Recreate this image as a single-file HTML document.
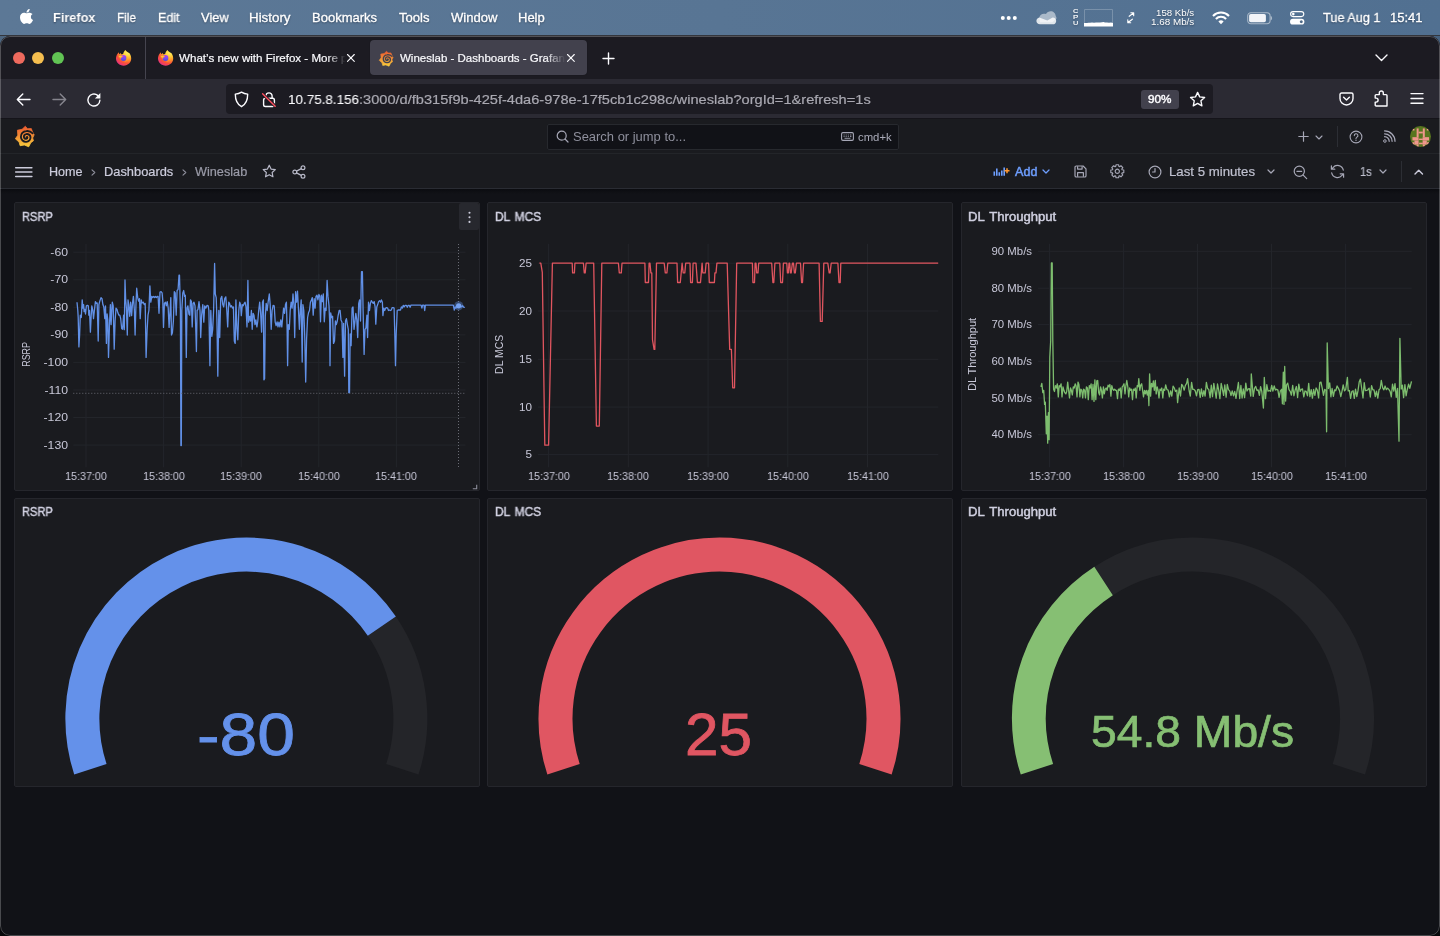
<!DOCTYPE html>
<html lang="en"><head><meta charset="utf-8"><title>Wineslab - Dashboards - Grafana</title>
<style>

html,body{margin:0;padding:0}
body{width:1440px;height:936px;overflow:hidden;position:relative;background:#07080a;font-family:"Liberation Sans",sans-serif;}
.t{position:absolute;white-space:nowrap;line-height:1;display:block;will-change:transform}
.abs{position:absolute}
svg{position:absolute;overflow:visible}
#desk{position:absolute;left:0;top:0;width:1440px;height:60px;background:linear-gradient(90deg,#4d657f,#45607e)}
#menubar{position:absolute;left:0;top:0;width:1440px;height:35px;background:linear-gradient(90deg,#5c7896 0%,#587594 50%,#517091 100%)}
#menubar .t{text-shadow:0 1px 2px rgba(0,0,20,.45)}
#menubar .m{-webkit-text-stroke:.3px #fff}
#mbline{position:absolute;left:0;top:35px;width:1440px;height:1px;background:#33363d}
#win{position:absolute;left:0;top:0;width:1440px;height:936px;clip-path:inset(36px 0 0 0 round 10px);background:#111217}
#winborder{position:absolute;left:0;top:36px;width:1438px;height:898px;border:1px solid rgba(255,255,255,.24);border-radius:10px;pointer-events:none}
#tabbar{position:absolute;left:0;top:36px;width:1440px;height:43px;background:#1c1b22}
#navbar{position:absolute;left:0;top:79px;width:1440px;height:39px;background:#2b2a33}
#navsep{position:absolute;left:0;top:118px;width:1440px;height:1px;background:#15141a}
#gtop{position:absolute;left:0;top:119px;width:1440px;height:35px;background:#1a1b1f;border-bottom:1px solid #232529;box-sizing:border-box}
#gbar{position:absolute;left:0;top:154px;width:1440px;height:34px;background:#1a1b1f}
#gbarline{position:absolute;left:0;top:188px;width:1440px;height:1px;background:#2a2c33}
#gshadow{position:absolute;left:0;top:189px;width:1440px;height:5px;background:linear-gradient(#0b0c10,#111217)}
.panel{position:absolute;background:#1a1b1f;border:1px solid #25262c;border-radius:2px;box-sizing:border-box}

</style></head>
<body>
<div id="desk"></div><div id="menubar"><svg style="left:19.700px;top:9.400px" width="13" height="15" viewBox="0 0 814 1000" preserveAspectRatio="none"><path fill="#fff" d="M788 340c-6 4-108 62-108 190 0 148 130 200 134 202-1 3-21 72-69 142-43 62-88 124-156 124s-86-40-165-40c-77 0-104 41-167 41s-106-57-156-127C43 790 0 663 0 542c0-194 126-297 250-297 66 0 121 43 162 43 39 0 101-46 176-46 28 0 130 3 197 98zM554 159c31-37 53-88 53-139 0-7-1-14-2-20-50 2-110 34-146 76-28 32-55 83-55 135 0 8 1 16 2 18 3 1 8 2 13 2 45 0 102-30 135-72z"/></svg>
<span class="t" style="left:52.60px;top:10.60px;font-size:13px;color:#fff;font-weight:700;transform:scaleX(0.9805);transform-origin:0 0;">Firefox</span>
<span class="t m" style="left:116.70px;top:10.60px;font-size:13px;color:#fff;transform:scaleX(0.9068);transform-origin:0 0;">File</span>
<span class="t m" style="left:157.70px;top:10.60px;font-size:13px;color:#fff;transform:scaleX(0.9640);transform-origin:0 0;">Edit</span>
<span class="t m" style="left:200.60px;top:10.60px;font-size:13px;color:#fff;transform:scaleX(0.9909);transform-origin:0 0;">View</span>
<span class="t m" style="left:249.40px;top:10.60px;font-size:13px;color:#fff;transform:scaleX(1.0259);transform-origin:0 0;">History</span>
<span class="t m" style="left:312.00px;top:10.60px;font-size:13px;color:#fff;transform:scaleX(0.9995);transform-origin:0 0;">Bookmarks</span>
<span class="t m" style="left:398.70px;top:10.60px;font-size:13px;color:#fff;transform:scaleX(1.0046);transform-origin:0 0;">Tools</span>
<span class="t m" style="left:450.50px;top:10.60px;font-size:13px;color:#fff;transform:scaleX(1.0054);transform-origin:0 0;">Window</span>
<span class="t m" style="left:517.50px;top:10.60px;font-size:13px;color:#fff;transform:scaleX(0.9981);transform-origin:0 0;">Help</span>
<svg style="left:1000px;top:14.900px" width="18" height="6" viewBox="0 0 18 6"><circle cx="2.800" cy="3" r="2" fill="#fff"/><circle cx="8.700" cy="3" r="2" fill="#fff"/><circle cx="14.800" cy="3" r="2" fill="#fff"/></svg>
<svg style="left:1035.800px;top:10.600px" width="20.500" height="13.500" viewBox="0 0 20.500 13.500"><path fill="#fff" fill-opacity=".5" d="M3.300 6.600C3.800 4.300 5.700 2.700 8 2.700c.7 0 1.400.2 2 .4C11 1.300 12.800.300 14.700.300c2.700 0 4.900 2.100 5 4.800.5.600.8 1.400.8 2.300l-4 3.900H4z"/><path fill="#fff" fill-opacity=".82" d="M4 13.300C1.900 13.300.4 11.800.4 10c0-1.700 1.200-3.100 2.900-3.400l8 3 5.400-3.100c2 .1 3.500 1.600 3.500 3.400 0 1.900-1.500 3.400-3.400 3.400z"/></svg>
<span class="t" style="left:1073.30px;top:8.42px;font-size:6px;color:#fff;transform:scaleX(1.2201);transform-origin:0 0;-webkit-text-stroke:.15px #fff;">C</span>
<span class="t" style="left:1073.30px;top:14.32px;font-size:6px;color:#fff;transform:scaleX(1.3198);transform-origin:0 0;-webkit-text-stroke:.15px #fff;">P</span>
<span class="t" style="left:1073.30px;top:20.22px;font-size:6px;color:#fff;transform:scaleX(1.2201);transform-origin:0 0;-webkit-text-stroke:.15px #fff;">U</span>
<div class="abs" style="left:1083.500px;top:9.200px;width:29px;height:16.800px;box-sizing:border-box;border:1px solid rgba(255,255,255,.22);border-bottom:none;border-radius:1px"></div>
<svg style="left:1083.5px;top:9.5px" width="29" height="16.5" viewBox="0 0 29 16.5"><path fill="#fff" d="M0 16.500V13.100L1.500 12.900 3 13 4.500 12.700 6 12.800 8 12.600 10 12.700 12 12.500 14 12.600 16 12.400 18 12.300 19.500 12 21 12.400 23 12.500 25 12.700 27 12.600 29 12.900V16.500z"/></svg>
<svg style="left:1127.300px;top:12px" width="7.500" height="11.500" viewBox="0 0 7.500 11.500" fill="none" stroke="#fff" stroke-width="1.100" stroke-linecap="round" stroke-linejoin="round"><path d="M2.200 4.300 6.500 1M3.800 .8h2.900v2.900M5.400 7.200 1 10.500M3.700 10.700H.8V7.800"/></svg>
<span class="t" style="left:1155.80px;top:8.95px;font-size:8.8px;color:#fff;transform:scaleX(1.0998);transform-origin:0 0;">158 Kb/s</span>
<span class="t" style="left:1150.70px;top:17.85px;font-size:8.8px;color:#fff;transform:scaleX(1.1206);transform-origin:0 0;">1.68 Mb/s</span>
<svg style="left:1211.5px;top:10.5px" width="18" height="13.500" viewBox="0 0 18 13.5"><g fill="none" stroke="#fff" stroke-width="2.100" stroke-linecap="butt"><path d="M1 4.900a11.200 11.200 0 0 1 16 0"/><path d="M3.900 7.900a7.100 7.100 0 0 1 10.200 0"/></g><path fill="#fff" d="M9 13.200 6.400 10.500a3.600 3.600 0 0 1 5.200 0z"/></svg>
<svg style="left:1247px;top:11.800px" width="25.500" height="12.400" viewBox="0 0 25.500 12.400"><rect x=".7" y=".7" width="22.400" height="11" rx="3.200" fill="none" stroke="#fff" stroke-opacity=".5" stroke-width="1.100"/><rect x="2.100" y="2.100" width="16.800" height="8.200" rx="1.700" fill="#f2f4f8"/><path d="M23.800 4.100v4.200c.8-.3 1.300-1.100 1.300-2.100s-.5-1.800-1.300-2.100z" fill="#fff" fill-opacity=".5"/></svg>
<svg style="left:1290px;top:10.700px" width="14.500" height="13.600" viewBox="0 0 14.500 13.600"><rect x=".6" y=".6" width="13.200" height="5" rx="2.500" fill="none" stroke="#fff" stroke-width="1.100"/><circle cx="3.300" cy="3.100" r="1.300" fill="#fff"/><rect x="0" y="7.700" width="14.400" height="5.900" rx="2.950" fill="#fff"/><circle cx="11.300" cy="10.650" r="1.500" fill="#4f6a88"/></svg>
<span class="t m" style="left:1322.50px;top:10.60px;font-size:13px;color:#fff;transform:scaleX(0.9779);transform-origin:0 0;">Tue Aug 1</span>
<span class="t m" style="left:1390.00px;top:10.60px;font-size:13px;color:#fff;transform:scaleX(0.9986);transform-origin:0 0;">15:41</span></div><div id="mbline"></div>
<div id="win">
<div id="tabbar"></div><div class="abs" style="left:12.8px;top:51.8px;width:12px;height:12px;border-radius:50%;background:#ee6a5e"></div>
<div class="abs" style="left:32.3px;top:51.8px;width:12px;height:12px;border-radius:50%;background:#f5be4f"></div>
<div class="abs" style="left:51.8px;top:51.8px;width:12px;height:12px;border-radius:50%;background:#61c454"></div>
<svg style="left:115.89px;top:49.75px" width="15.22" height="15.70" viewBox="120 116 316 326">
<defs><radialGradient id="fxoa" gradientUnits="userSpaceOnUse" cx="372" cy="150" r="330"><stop offset="0" stop-color="#fff56a"/><stop offset=".28" stop-color="#ffd43e"/><stop offset=".5" stop-color="#ff9a2a"/><stop offset=".74" stop-color="#fa5038"/><stop offset="1" stop-color="#e62e86"/></radialGradient>
<linearGradient id="fxia" x1="0" y1="0" x2="0" y2="1"><stop offset="0" stop-color="#b63ee6"/><stop offset=".55" stop-color="#7a4cf0"/><stop offset="1" stop-color="#4a50d8"/></linearGradient></defs>
<path fill="url(#fxoa)" d="M318 116 C335 145 352 158 372 168 C390 176 402 184 408 194 C422 215 434 250 436 295 C436 375 372 442 280 442 C190 442 120 378 120 295 C120 255 134 220 150 200 C156 190 164 176 172 163 C178 182 186 194 196 202 C202 192 208 184 216 176 C222 192 230 202 242 208 C252 200 262 196 270 192 C276 165 292 135 318 116Z"/>
<circle cx="276" cy="282" r="60" fill="url(#fxia)"/>
<path fill="#ff9a2a" d="M168 236 C200 232 240 240 272 258 C250 262 232 274 222 296 C200 290 178 270 168 236Z"/>
<path fill="#ffcf3e" fill-opacity=".9" d="M180 244 C205 240 240 246 268 258 C248 258 230 262 214 270 C200 264 188 256 180 244Z"/>
<path fill="none" stroke="#ffb52e" stroke-opacity=".55" stroke-width="14" d="M346 232 C372 290 350 350 296 362"/>
</svg>
<div class="abs" style="left:144.800px;top:37px;width:1.400px;height:42px;background:#45444f"></div>
<svg style="left:157.89px;top:49.95px" width="15.22" height="15.70" viewBox="120 116 316 326">
<defs><radialGradient id="fxob" gradientUnits="userSpaceOnUse" cx="372" cy="150" r="330"><stop offset="0" stop-color="#fff56a"/><stop offset=".28" stop-color="#ffd43e"/><stop offset=".5" stop-color="#ff9a2a"/><stop offset=".74" stop-color="#fa5038"/><stop offset="1" stop-color="#e62e86"/></radialGradient>
<linearGradient id="fxib" x1="0" y1="0" x2="0" y2="1"><stop offset="0" stop-color="#b63ee6"/><stop offset=".55" stop-color="#7a4cf0"/><stop offset="1" stop-color="#4a50d8"/></linearGradient></defs>
<path fill="url(#fxob)" d="M318 116 C335 145 352 158 372 168 C390 176 402 184 408 194 C422 215 434 250 436 295 C436 375 372 442 280 442 C190 442 120 378 120 295 C120 255 134 220 150 200 C156 190 164 176 172 163 C178 182 186 194 196 202 C202 192 208 184 216 176 C222 192 230 202 242 208 C252 200 262 196 270 192 C276 165 292 135 318 116Z"/>
<circle cx="276" cy="282" r="60" fill="url(#fxib)"/>
<path fill="#ff9a2a" d="M168 236 C200 232 240 240 272 258 C250 262 232 274 222 296 C200 290 178 270 168 236Z"/>
<path fill="#ffcf3e" fill-opacity=".9" d="M180 244 C205 240 240 246 268 258 C248 258 230 262 214 270 C200 264 188 256 180 244Z"/>
<path fill="none" stroke="#ffb52e" stroke-opacity=".55" stroke-width="14" d="M346 232 C372 290 350 350 296 362"/>
</svg>
<span class="t" style="left:179.00px;top:53.17px;font-size:11.5px;color:#fbfbfe;transform:scaleX(1.0076);transform-origin:0 0;-webkit-text-stroke:.2px #fbfbfe;-webkit-mask-image:linear-gradient(90deg,#000 88%,transparent 99%);mask-image:linear-gradient(90deg,#000 88%,transparent 99%);">What&#8217;s new with Firefox - More p</span>
<svg style="left:346.8px;top:54.3px" width="7.8" height="7.8" viewBox="-3.9 -3.9 7.8 7.8"><path d="M-3.4 -3.4L3.4 3.4M3.4 -3.4L-3.4 3.4" stroke="#fbfbfe" stroke-width="1.1" stroke-linecap="round"/></svg>
<div class="abs" style="left:370px;top:40px;width:217px;height:35px;border-radius:4px;background:#42414d;box-shadow:0 0 1px rgba(0,0,0,.5)"></div>
<svg style="left:379.08px;top:50.70px" width="14.24" height="15.40" viewBox="205 120 615 665">
<defs><linearGradient id="glt" x1="0" y1="0" x2="0" y2="1"><stop offset="0" stop-color="#ec5a30"/><stop offset=".45" stop-color="#f08a35"/><stop offset="1" stop-color="#f8cd3c"/></linearGradient></defs>
<path d="M532 128 L600 205 L722 202 L755 295 L812 400 L765 500 L790 588 L705 650 L640 778 L500 722 L367 745 L335 630 L216 525 L295 410 L282 252 L430 225 Z" fill="url(#glt)" stroke="url(#glt)" stroke-width="26" stroke-linejoin="round"/>
<path d="M764 352 A235 235 0 0 0 560 282 A178 178 0 0 0 392 470 A158 158 0 0 0 560 622 A145 145 0 0 0 697 470 A112 112 0 0 0 560 376 A82 82 0 0 0 488 470 A62 62 0 0 0 560 528 A45 45 0 0 0 596 478" fill="none" stroke="#42414d" stroke-width="60" stroke-linecap="round"/>
<circle cx="578" cy="482" r="40" fill="#42414d"/>
</svg>
<span class="t" style="left:399.50px;top:53.17px;font-size:11.5px;color:#fbfbfe;transform:scaleX(1.0006);transform-origin:0 0;-webkit-text-stroke:.2px #fbfbfe;-webkit-mask-image:linear-gradient(90deg,#000 88%,transparent 100%);mask-image:linear-gradient(90deg,#000 88%,transparent 100%);">Wineslab - Dashboards - Grafan</span>
<svg style="left:567.3px;top:54.3px" width="7.8" height="7.8" viewBox="-3.9 -3.9 7.8 7.8"><path d="M-3.4 -3.4L3.4 3.4M3.4 -3.4L-3.4 3.4" stroke="#fbfbfe" stroke-width="1.1" stroke-linecap="round"/></svg>
<svg style="left:601.5px;top:52px" width="13" height="13" viewBox="0 0 13 13"><path d="M6.500 1v11M1 6.500h11" stroke="#fbfbfe" stroke-width="1.400" stroke-linecap="round"/></svg>
<svg style="left:1375px;top:53.500px" width="13" height="8" viewBox="0 0 13 8"><path d="M1 1l5.500 5.500L12 1" fill="none" stroke="#fbfbfe" stroke-width="1.400" stroke-linecap="round" stroke-linejoin="round"/></svg>
<div id="navbar"></div><div id="navsep"></div><svg style="left:16px;top:92px" width="15" height="15" viewBox="0 0 15 15"><path d="M14 7.500H1.500M6.800 2l-5.500 5.500 5.500 5.500" fill="none" stroke="#fbfbfe" stroke-width="1.400" stroke-linecap="round" stroke-linejoin="round"/></svg>
<svg style="left:51.500px;top:92px" width="15" height="15" viewBox="0 0 15 15"><path d="M1 7.500h12.500M8.200 2l5.500 5.500-5.500 5.500" fill="none" stroke="#85848d" stroke-width="1.400" stroke-linecap="round" stroke-linejoin="round"/></svg>
<svg style="left:85.900px;top:91.600px" width="16" height="16" viewBox="0 0 16 16"><path d="M13.900 8.300a6 6 0 1 1-2.200-4.900" fill="none" stroke="#fbfbfe" stroke-width="1.400" stroke-linecap="round"/><path d="M14.400 .9v5.500H8.900z" fill="#fbfbfe"/></svg>
<div class="abs" style="left:226.200px;top:83.700px;width:987.200px;height:30.600px;border-radius:4px;background:#1c1b22"></div>
<svg style="left:234px;top:90.700px" width="15" height="17" viewBox="0 0 15 17"><path d="M7.500 1.200c2 1.300 4 1.800 6.200 1.900 0 5.600-1.500 10.200-6.200 12.600C2.800 13.300 1.300 8.700 1.300 3.100c2.200-.1 4.200-.6 6.200-1.900z" fill="none" stroke="#fbfbfe" stroke-width="1.400" stroke-linejoin="round"/></svg>
<svg style="left:261.300px;top:90.500px" width="16" height="17" viewBox="0 0 16 17"><rect x="2.600" y="7.300" width="10.800" height="8.200" rx="1.800" fill="none" stroke="#fbfbfe" stroke-width="1.400"/><path d="M4.900 7.200V5a3.100 3.100 0 0 1 6.200 0v2.200" fill="none" stroke="#fbfbfe" stroke-width="1.400"/><path d="M1.600 2.800 14.200 15.200" stroke="#1c1b22" stroke-width="3.200"/><path d="M1.600 2.800 14.200 15.200" stroke="#ff4f5e" stroke-width="1.400" stroke-linecap="round"/></svg>
<span class="t" style="left:287.50px;top:93.09px;font-size:13.6px;color:#fbfbfe;transform:scaleX(0.9887);transform-origin:0 0;-webkit-text-stroke:.08px #fbfbfe;">10.75.8.156</span>
<span class="t" style="left:358.80px;top:93.09px;font-size:13.6px;color:#a9a8b1;transform:scaleX(1.0747);transform-origin:0 0;-webkit-text-stroke:.2px #a9a8b1;">:3000/d/fb315f9b-425f-4da6-978e-17f5cb1c298c/wineslab?orgId=1&amp;refresh=1s</span>
<div class="abs" style="left:1141px;top:90px;width:37.500px;height:18.500px;border-radius:3px;background:#42414d"></div>
<span class="t" style="left:1147.80px;top:93.99px;font-size:11px;color:#fbfbfe;transform:scaleX(1.0621);transform-origin:0 0;-webkit-text-stroke:.45px #fbfbfe;">90%</span>
<svg style="left:1189.300px;top:90.700px" width="17.200" height="16.800" viewBox="0 0 16 16"><path d="M8 1.300l2 4.300 4.700.6-3.500 3.200.9 4.700L8 11.800l-4.100 2.300.9-4.700L1.300 6.200 6 5.600z" fill="none" stroke="#fbfbfe" stroke-width="1.300" stroke-linejoin="round"/></svg>
<svg style="left:1338.500px;top:92px" width="15" height="14" viewBox="0 0 15 14"><path d="M2.600 1h9.800c.9 0 1.600.7 1.600 1.600v3.900a6.500 6.500 0 0 1-13 0V2.600C1 1.700 1.700 1 2.600 1z" fill="none" stroke="#fbfbfe" stroke-width="1.400"/><path d="M4.600 5.300 7.500 8.100l2.900-2.800" fill="none" stroke="#fbfbfe" stroke-width="1.400" stroke-linecap="round" stroke-linejoin="round"/></svg>
<svg style="left:1374.300px;top:90.200px" width="14.500" height="17" viewBox="0 0 14.500 17"><path d="M5.300 4.600V3a2 2 0 0 1 4 0v1.600h2.700c.6 0 1 .4 1 1V16H2.200c-.6 0-1-.4-1-1v-2.900h.9a2 2 0 0 0 0-4h-.9V5.600c0-.6.400-1 1-1z" fill="none" stroke="#fbfbfe" stroke-width="1.400" stroke-linejoin="round"/></svg>
<svg style="left:1409.700px;top:92.100px" width="14" height="12" viewBox="0 0 14 12"><path d="M1 1.600h12M1 6.500h12M1 11.300h12" stroke="#fbfbfe" stroke-width="1.400" stroke-linecap="round"/></svg>
<div id="gtop"></div><svg style="left:14.74px;top:126.00px" width="19.42" height="21.00" viewBox="205 120 615 665">
<defs><linearGradient id="glm" x1="0" y1="0" x2="0" y2="1"><stop offset="0" stop-color="#ec5a30"/><stop offset=".45" stop-color="#f08a35"/><stop offset="1" stop-color="#f8cd3c"/></linearGradient></defs>
<path d="M532 128 L600 205 L722 202 L755 295 L812 400 L765 500 L790 588 L705 650 L640 778 L500 722 L367 745 L335 630 L216 525 L295 410 L282 252 L430 225 Z" fill="url(#glm)" stroke="url(#glm)" stroke-width="26" stroke-linejoin="round"/>
<path d="M764 352 A235 235 0 0 0 560 282 A178 178 0 0 0 392 470 A158 158 0 0 0 560 622 A145 145 0 0 0 697 470 A112 112 0 0 0 560 376 A82 82 0 0 0 488 470 A62 62 0 0 0 560 528 A45 45 0 0 0 596 478" fill="none" stroke="#1a1b1f" stroke-width="60" stroke-linecap="round"/>
<circle cx="578" cy="482" r="40" fill="#1a1b1f"/>
</svg>
<div class="abs" style="left:547px;top:124px;width:352px;height:26px;box-sizing:border-box;border:1px solid #27292e;border-radius:2px;background:#111217"></div>
<svg style="left:555.500px;top:130px" width="13" height="13" viewBox="0 0 13 13"><circle cx="5.700" cy="5.700" r="4.500" fill="none" stroke="#a6a7b6" stroke-width="1.200"/><path d="M9 9l3 3" stroke="#a6a7b6" stroke-width="1.200" stroke-linecap="round"/></svg>
<span class="t" style="left:572.80px;top:131.00px;font-size:12.4px;color:#8e8f9c;transform:scaleX(1.0451);transform-origin:0 0;">Search or jump to...</span>
<svg style="left:841px;top:132px" width="13" height="9" viewBox="0 0 13 9"><rect x=".6" y=".6" width="11.800" height="7.800" rx="1.300" fill="none" stroke="#a6a7b6" stroke-width="1.100"/><path d="M2.600 3h1M4.700 3h1M6.800 3h1M9 3h1.400M2.600 4.600h1M4.700 4.600h1M6.800 4.600h1M9 4.600h1.400M3.500 6.300h6" stroke="#a6a7b6" stroke-width=".9"/></svg>
<span class="t" style="left:858.00px;top:131.79px;font-size:11px;color:#a9aab8;transform:scaleX(1.0300);transform-origin:0 0;">cmd+k</span>
<svg style="left:1297.500px;top:131px" width="11" height="11" viewBox="0 0 11 11"><path d="M5.500 .8v9.400M.8 5.500h9.400" stroke="#a6a7b6" stroke-width="1.200" stroke-linecap="round"/></svg>
<svg style="left:1314.500px;top:134.500px" width="8" height="5" viewBox="0 0 8 5"><path d="M1 1l3 3 3-3" fill="none" stroke="#a6a7b6" stroke-width="1.100" stroke-linecap="round" stroke-linejoin="round"/></svg>
<div class="abs" style="left:1336.500px;top:126px;width:1px;height:21px;background:#2c2e34"></div>
<svg style="left:1348.500px;top:130px" width="14" height="14" viewBox="0 0 14 14"><circle cx="7" cy="7" r="5.900" fill="none" stroke="#a6a7b6" stroke-width="1.100"/><path d="M5.300 5.600a1.800 1.800 0 1 1 2.700 1.500c-.6.400-1 .7-1 1.400" fill="none" stroke="#a6a7b6" stroke-width="1.100" stroke-linecap="round"/><circle cx="7" cy="10.200" r=".7" fill="#a6a7b6"/></svg>
<svg style="left:1383px;top:130px" width="13" height="13" viewBox="0 0 13 13"><circle cx="1.900" cy="11" r="1.300" fill="none" stroke="#a6a7b6" stroke-width="1"/><path d="M1.600 6.700a4.600 4.600 0 0 1 4.600 4.600M1.600 3.800a7.500 7.500 0 0 1 7.500 7.500M1.600 .9A10.400 10.400 0 0 1 12 11.300" fill="none" stroke="#a6a7b6" stroke-width="1.250" stroke-linecap="round"/></svg>
<svg style="left:1409.800px;top:125.900px" width="21" height="21" viewBox="1168 53 190 190"><defs><clipPath id="avc"><circle cx="1263" cy="148" r="95"/></clipPath></defs><g clip-path="url(#avc)"><rect x="1168" y="53" width="190" height="190" fill="#58751f"/><rect x="1228" y="75" width="18" height="78" fill="#f0968c"/><rect x="1284" y="75" width="18" height="78" fill="#f0968c"/><rect x="1246" y="104" width="38" height="16" fill="#f0968c"/><rect x="1192" y="80" width="16" height="14" fill="#f0968c"/><rect x="1320" y="80" width="16" height="14" fill="#f0968c"/><rect x="1190" y="154" width="56" height="30" fill="#f0968c"/><rect x="1282" y="154" width="58" height="30" fill="#f0968c"/><rect x="1208" y="184" width="38" height="38" fill="#f0968c"/><rect x="1282" y="184" width="38" height="38" fill="#f0968c"/><rect x="1190" y="200" width="18" height="22" fill="#f0968c"/><rect x="1322" y="200" width="18" height="22" fill="#f0968c"/><rect x="1250" y="167" width="34" height="13" fill="#f0968c"/><rect x="1250" y="204" width="34" height="14" fill="#f0968c"/><rect x="1228" y="222" width="18" height="22" fill="#f0968c"/><rect x="1284" y="222" width="18" height="22" fill="#f0968c"/></g></svg>
<div id="gbar"></div><div id="gbarline"></div><div id="gshadow"></div><svg style="left:15.300px;top:165.500px" width="17.600" height="12" viewBox="0 0 17.600 12"><path d="M.7 1.700h16.200M.7 6h16.200M.7 10.400h16.200" stroke="#ccccdc" stroke-width="1.500" stroke-linecap="round"/></svg>
<span class="t" style="left:48.70px;top:165.83px;font-size:12.6px;color:#ccccdc;transform:scaleX(0.9913);transform-origin:0 0;-webkit-text-stroke:.2px #ccccdc;">Home</span>
<svg style="left:91px;top:168.500px" width="5" height="7" viewBox="0 0 5 7"><path d="M1 .8 3.800 3.500 1 6.200" fill="none" stroke="#8e8f9c" stroke-width="1.100" stroke-linecap="round" stroke-linejoin="round"/></svg>
<span class="t" style="left:103.70px;top:165.83px;font-size:12.6px;color:#ccccdc;transform:scaleX(1.0203);transform-origin:0 0;-webkit-text-stroke:.2px #ccccdc;">Dashboards</span>
<svg style="left:181.500px;top:168.500px" width="5" height="7" viewBox="0 0 5 7"><path d="M1 .8 3.800 3.500 1 6.200" fill="none" stroke="#8e8f9c" stroke-width="1.100" stroke-linecap="round" stroke-linejoin="round"/></svg>
<span class="t" style="left:194.50px;top:165.83px;font-size:12.6px;color:#9a9ba8;transform:scaleX(1.0078);transform-origin:0 0;-webkit-text-stroke:.2px #9a9ba8;">Wineslab</span>
<svg style="left:261.500px;top:164px" width="14.500" height="14.500" viewBox="0 0 16 16"><path d="M8 1.300l2 4.300 4.700.6-3.500 3.200.9 4.700L8 11.800l-4.100 2.300.9-4.700L1.300 6.200 6 5.600z" fill="none" stroke="#b8b9c8" stroke-width="1.300" stroke-linejoin="round"/></svg>
<svg style="left:291.500px;top:164.500px" width="14" height="14" viewBox="0 0 14 14"><g fill="none" stroke="#b8b9c8" stroke-width="1.200"><circle cx="2.800" cy="7" r="1.900"/><circle cx="11" cy="2.700" r="1.900"/><circle cx="11" cy="11.300" r="1.900"/><path d="M4.500 6.100 9.300 3.600M4.500 7.900l4.800 2.500"/></g></svg>
<svg style="left:993px;top:165.500px" width="17" height="11" viewBox="0 0 17 11"><path d="M1.300 9.800V5.600M3.800 9.800V2.400M6.300 9.800V6.300M8.800 9.800V4.400M11.200 9.800V1.400" stroke="#6e9fff" stroke-width="1.600"/><path d="M14 2.300v5M11.500 4.800h5" stroke="#ff9830" stroke-width="1.500"/></svg>
<span class="t" style="left:1015.00px;top:165.93px;font-size:12.6px;color:#6e9fff;transform:scaleX(0.9946);transform-origin:0 0;-webkit-text-stroke:.5px #6e9fff;">Add</span>
<svg style="left:1042px;top:169px" width="8" height="5" viewBox="0 0 8 5"><path d="M1 1l3 3 3-3" fill="none" stroke="#6e9fff" stroke-width="1.300" stroke-linecap="round" stroke-linejoin="round"/></svg>
<svg style="left:1073.500px;top:165px" width="13" height="13" viewBox="0 0 13 13"><path d="M2.300 1h6.800l2.900 2.900v6.800c0 .7-.6 1.300-1.300 1.300H2.300C1.600 12 1 11.400 1 10.700V2.300C1 1.600 1.600 1 2.300 1z" fill="none" stroke="#a6a7b6" stroke-width="1.200" stroke-linejoin="round"/><path d="M3.600 1.200v2.900h4.500V1.200M3.600 11.800V7.700h5.800v4.100" fill="none" stroke="#a6a7b6" stroke-width="1.200" stroke-linejoin="round"/></svg>
<svg style="left:1109.7px;top:164.2px" width="14.6" height="14.6" viewBox="-1.1 -1.1 2.2 2.2"><path d="M0.980 -0.199L0.980 0.199L0.721 0.239L0.679 0.341L0.833 0.553L0.553 0.833L0.341 0.679L0.239 0.721L0.199 0.980L-0.199 0.980L-0.239 0.721L-0.341 0.679L-0.553 0.833L-0.833 0.553L-0.679 0.341L-0.721 0.239L-0.980 0.199L-0.980 -0.199L-0.721 -0.239L-0.679 -0.341L-0.833 -0.553L-0.553 -0.833L-0.341 -0.679L-0.239 -0.721L-0.199 -0.980L0.199 -0.980L0.239 -0.721L0.341 -0.679L0.553 -0.833L0.833 -0.553L0.679 -0.341L0.721 -0.239z" fill="none" stroke="#a6a7b6" stroke-width=".17" stroke-linejoin="round"/><circle r=".32" fill="none" stroke="#a6a7b6" stroke-width=".17"/></svg>
<svg style="left:1147.500px;top:164.500px" width="14" height="14" viewBox="0 0 14 14"><circle cx="7" cy="7" r="5.900" fill="none" stroke="#a6a7b6" stroke-width="1.200"/><path d="M7 3.600V7H4.600" fill="none" stroke="#a6a7b6" stroke-width="1.200" stroke-linecap="round" stroke-linejoin="round"/></svg>
<span class="t" style="left:1169.30px;top:165.93px;font-size:12.6px;color:#bfc0cf;transform:scaleX(1.0500);transform-origin:0 0;-webkit-text-stroke:.2px #bfc0cf;">Last 5 minutes</span>
<svg style="left:1266.500px;top:169px" width="8" height="5" viewBox="0 0 8 5"><path d="M1 1l3 3 3-3" fill="none" stroke="#a6a7b6" stroke-width="1.200" stroke-linecap="round" stroke-linejoin="round"/></svg>
<svg style="left:1293px;top:164.500px" width="15" height="15" viewBox="0 0 15 15"><circle cx="6.300" cy="6.300" r="5.100" fill="none" stroke="#a6a7b6" stroke-width="1.200"/><path d="M10.200 10.200l3.500 3.500M3.900 6.300h4.800" stroke="#a6a7b6" stroke-width="1.200" stroke-linecap="round"/></svg>
<svg style="left:1330px;top:164px" width="15" height="15" viewBox="0 0 15 15"><g fill="none" stroke="#a6a7b6" stroke-width="1.200" stroke-linecap="round" stroke-linejoin="round"><path d="M13.300 6.200A5.900 5.900 0 0 0 3 3.600L1.400 5.200M1.400 1.800v3.400h3.400"/><path d="M1.700 8.800A5.900 5.900 0 0 0 12 11.400l1.600-1.600M13.600 13.200V9.800h-3.400"/></g></svg>
<span class="t" style="left:1360.00px;top:165.93px;font-size:12.6px;color:#bfc0cf;transform:scaleX(0.8789);transform-origin:0 0;-webkit-text-stroke:.2px #bfc0cf;">1s</span>
<svg style="left:1378.500px;top:169px" width="8" height="5" viewBox="0 0 8 5"><path d="M1 1l3 3 3-3" fill="none" stroke="#a6a7b6" stroke-width="1.200" stroke-linecap="round" stroke-linejoin="round"/></svg>
<div class="abs" style="left:1400.500px;top:161px;width:1px;height:21px;background:#2c2e34"></div>
<svg style="left:1414px;top:169px" width="9.500" height="6" viewBox="0 0 9.500 6"><path d="M1 5l3.750-3.800L8.500 5" fill="none" stroke="#ccccdc" stroke-width="1.400" stroke-linecap="round" stroke-linejoin="round"/></svg>
<div class="panel" style="left:13.5px;top:202.1px;width:466.1px;height:288.5px"></div>
<div class="panel" style="left:13.5px;top:498.2px;width:466.1px;height:288.5px"></div>
<div class="panel" style="left:487.1px;top:202.1px;width:466.1px;height:288.5px"></div>
<div class="panel" style="left:487.1px;top:498.2px;width:466.1px;height:288.5px"></div>
<div class="panel" style="left:960.7px;top:202.1px;width:466.1px;height:288.5px"></div>
<div class="panel" style="left:960.7px;top:498.2px;width:466.1px;height:288.5px"></div>
<span class="t" style="left:21.80px;top:210.67px;font-size:12.2px;color:#d0d0e0;transform:scaleX(0.9092);transform-origin:0 0;-webkit-text-stroke:.45px #d0d0e0;word-spacing:1.500px;">RSRP</span>
<span class="t" style="left:494.50px;top:210.67px;font-size:12.2px;color:#d0d0e0;transform:scaleX(0.9786);transform-origin:0 0;-webkit-text-stroke:.45px #d0d0e0;word-spacing:1.500px;">DL MCS</span>
<span class="t" style="left:967.60px;top:210.67px;font-size:12.2px;color:#d0d0e0;transform:scaleX(1.0738);transform-origin:0 0;-webkit-text-stroke:.45px #d0d0e0;word-spacing:1.500px;">DL Throughput</span>
<span class="t" style="left:21.80px;top:506.17px;font-size:12.2px;color:#d0d0e0;transform:scaleX(0.9092);transform-origin:0 0;-webkit-text-stroke:.45px #d0d0e0;word-spacing:1.500px;">RSRP</span>
<span class="t" style="left:494.50px;top:506.17px;font-size:12.2px;color:#d0d0e0;transform:scaleX(0.9786);transform-origin:0 0;-webkit-text-stroke:.45px #d0d0e0;word-spacing:1.500px;">DL MCS</span>
<span class="t" style="left:967.60px;top:506.17px;font-size:12.2px;color:#d0d0e0;transform:scaleX(1.0738);transform-origin:0 0;-webkit-text-stroke:.45px #d0d0e0;word-spacing:1.500px;">DL Throughput</span>
<div class="abs" style="left:458.700px;top:203.100px;width:20px;height:27px;border-radius:2px;background:#27282e"></div>
<svg style="left:467.500px;top:210.500px" width="3" height="13" viewBox="0 0 3 13"><circle cx="1.500" cy="1.700" r="1.050" fill="#ccccdc"/><circle cx="1.500" cy="6.300" r="1.050" fill="#ccccdc"/><circle cx="1.500" cy="10.900" r="1.050" fill="#ccccdc"/></svg>
<svg style="left:472px;top:483.500px" width="6" height="6" viewBox="0 0 6 6"><path d="M.8 4.700h3.900V.8" fill="none" stroke="#8e8f9c" stroke-width="1.100"/></svg>
<svg style="left:0;top:0" width="1440" height="936" viewBox="0 0 1440 936"><path d="M73.3 252.2H465.5" stroke="#23252a" stroke-width="1"/><path d="M73.3 279.8H465.5" stroke="#23252a" stroke-width="1"/><path d="M73.3 307.3H465.5" stroke="#23252a" stroke-width="1"/><path d="M73.3 334.9H465.5" stroke="#23252a" stroke-width="1"/><path d="M73.3 362.4H465.5" stroke="#23252a" stroke-width="1"/><path d="M73.3 390.0H465.5" stroke="#23252a" stroke-width="1"/><path d="M73.3 417.5H465.5" stroke="#23252a" stroke-width="1"/><path d="M73.3 445.1H465.5" stroke="#23252a" stroke-width="1"/><path d="M86.0 243.8V467.3" stroke="#23252a" stroke-width="1"/><path d="M163.6 243.8V467.3" stroke="#23252a" stroke-width="1"/><path d="M241.2 243.8V467.3" stroke="#23252a" stroke-width="1"/><path d="M318.8 243.8V467.3" stroke="#23252a" stroke-width="1"/><path d="M396.4 243.8V467.3" stroke="#23252a" stroke-width="1"/><polyline points="77.0,302.2 77.8,310.5 78.2,317.5 78.9,346.9 79.6,335.1 80.3,315.2 81.3,317.5 82.2,299.9 82.9,308.1 83.6,304.6 84.1,311.6 84.8,309.3 85.5,314.0 86.4,305.8 87.4,305.3 88.3,305.8 88.8,315.2 89.5,310.5 90.4,332.1 91.1,317.5 91.8,305.8 92.8,310.5 93.5,318.7 94.4,310.5 95.4,301.6 96.3,303.4 97.2,303.0 98.2,341.0 98.9,304.6 99.8,301.1 101.0,297.6 102.0,298.7 102.9,304.6 103.8,306.9 104.8,318.7 105.5,305.8 106.4,343.4 107.1,314.0 107.8,319.9 108.5,357.4 109.5,324.6 110.4,304.6 111.1,324.6 112.3,302.2 113.2,305.8 114.2,349.2 115.1,321.0 116.0,308.1 117.0,309.3 117.9,312.8 118.9,315.2 119.8,315.2 120.7,318.7 121.7,328.8 122.6,329.3 123.6,315.2 124.3,329.7 125.0,279.9 125.7,299.9 126.4,308.1 127.3,335.1 128.0,299.9 128.7,304.6 129.7,316.3 130.6,302.2 131.6,315.6 132.5,303.4 133.4,296.4 134.4,310.5 135.1,335.1 136.0,303.4 136.7,288.2 137.7,297.6 138.6,301.1 139.5,298.7 140.2,318.7 141.2,299.9 142.1,303.0 143.3,302.2 144.2,304.6 145.2,303.4 146.1,357.4 147.1,330.4 148.0,315.2 148.9,310.5 149.9,285.8 150.8,302.2 151.8,296.4 152.7,297.6 153.6,296.4 154.6,297.6 155.5,296.4 156.4,297.6 157.4,296.4 158.1,296.4 159.0,313.3 160.0,292.1 161.1,291.7 162.1,292.9 162.8,301.1 163.5,327.4 164.4,303.4 165.4,302.2 166.3,305.8 167.2,301.6 168.2,308.1 169.1,327.4 170.1,310.5 170.8,297.6 171.5,335.1 172.4,332.8 173.4,321.0 174.3,291.7 175.2,292.9 176.2,315.2 177.1,290.5 178.1,289.3 179.0,275.2 179.5,275.2 180.4,310.5 180.9,445.5 181.3,445.5 181.8,310.5 182.8,292.9 183.7,290.5 184.6,296.4 185.3,295.2 186.3,357.4 187.0,308.1 187.9,305.8 188.9,314.0 189.8,315.2 190.5,299.9 191.4,301.6 192.2,326.9 193.1,303.4 194.0,302.2 195.0,305.8 195.9,332.8 196.4,351.6 197.1,310.5 198.0,309.3 199.0,301.6 200.0,310.5 200.7,337.5 201.6,315.2 202.8,304.6 203.8,322.2 204.7,305.8 205.9,308.1 207.1,305.3 208.2,305.8 208.9,310.5 209.9,365.7 210.8,310.5 211.8,336.3 212.7,329.3 213.6,310.5 214.6,263.5 215.3,294.0 216.2,297.6 216.9,318.7 217.8,376.2 218.8,310.5 219.7,337.5 220.7,298.7 221.8,296.4 222.8,304.6 223.7,306.9 224.7,298.7 225.8,296.9 226.8,310.5 227.7,326.9 228.7,302.2 229.6,303.4 230.5,306.9 231.5,305.8 232.4,308.1 233.4,306.9 234.3,341.0 235.2,343.4 235.9,299.9 236.9,328.1 237.8,339.8 238.8,310.5 239.7,302.2 240.6,304.6 241.3,315.6 242.3,304.6 243.2,305.8 244.2,303.4 245.1,302.2 246.0,306.9 247.0,326.9 247.9,280.4 248.6,322.2 249.6,316.3 250.5,321.0 251.4,310.5 252.2,329.3 253.1,313.3 254.0,315.2 255.0,324.6 255.9,319.9 256.9,326.9 257.8,321.0 258.7,310.5 259.7,302.2 260.6,312.8 261.6,332.1 262.5,302.2 263.4,299.9 263.9,379.8 264.6,378.6 265.3,316.3 266.2,303.4 267.2,310.5 268.1,302.2 269.3,294.0 270.2,304.6 271.2,329.3 272.1,310.5 273.1,305.3 274.2,305.8 275.2,322.2 276.1,325.7 277.1,321.8 278.0,326.9 278.9,322.2 279.9,326.9 280.8,319.9 281.8,326.9 282.7,317.5 283.6,308.1 284.6,313.3 285.5,304.6 286.4,302.2 287.1,328.1 287.6,365.7 288.3,324.6 289.3,329.3 290.2,310.5 291.1,302.2 292.1,308.1 293.0,294.0 294.0,305.8 294.7,337.5 295.6,291.7 296.6,302.2 297.5,291.2 298.4,308.1 299.4,329.3 300.3,310.5 301.2,299.9 302.2,362.1 302.9,304.6 303.8,310.5 304.8,338.7 305.7,382.1 306.6,338.7 307.6,317.5 308.5,312.8 309.5,310.5 310.4,302.2 311.4,299.9 312.3,297.6 313.2,315.2 314.2,298.7 315.1,308.1 316.0,296.4 317.0,295.2 317.9,299.9 318.9,294.5 319.8,296.4 320.5,321.8 321.4,295.2 322.4,301.6 323.3,294.0 324.3,321.8 325.2,308.1 326.1,310.5 327.1,280.4 328.0,296.4 329.0,305.8 329.7,322.2 330.0,365.7 330.7,312.8 331.6,317.5 332.6,316.3 333.5,343.4 334.5,341.0 335.4,321.0 336.3,324.6 337.3,321.0 338.2,315.2 339.2,310.5 340.1,310.5 341.0,319.9 342.0,322.2 342.9,357.4 343.6,323.4 344.6,376.2 345.5,321.0 346.4,318.7 347.4,324.6 348.3,329.3 348.8,392.7 349.5,392.7 350.2,334.0 351.1,345.7 352.1,308.1 353.0,306.9 354.0,329.3 354.9,322.2 355.8,313.3 356.8,319.9 357.7,337.5 358.7,303.4 359.6,299.9 360.5,321.0 361.5,271.7 362.4,271.7 363.1,310.5 364.1,354.4 365.0,329.3 365.9,328.1 366.9,315.2 367.6,337.5 368.5,302.2 369.5,310.5 370.4,303.4 371.3,300.6 372.3,302.2 373.2,303.4 374.2,301.6 375.1,306.9 375.8,324.1 376.8,306.9 377.7,304.6 378.6,301.6 379.6,300.6 380.5,302.2 381.4,299.9 382.4,302.2 382.9,315.6 383.8,308.1 384.7,310.5 385.7,308.1 386.6,307.6 387.6,308.1 388.5,310.5 389.4,310.0 390.4,310.5 391.3,310.0 392.2,307.6 393.2,307.6 394.1,308.1 394.8,334.0 395.5,365.7 396.2,334.0 397.2,310.5 398.1,310.0 399.3,310.0 400.5,310.0 401.4,306.9 402.4,308.1 403.3,305.3 404.2,306.9 405.2,305.3 406.3,305.3 407.3,307.2 408.2,305.3 409.2,305.3 410.1,307.2 411.0,305.1 412.2,305.1 421.1,305.1 421.9,308.1 422.6,305.1 424.0,305.1 424.7,310.5 425.4,305.1 453.3,305.1 454.3,310.0 455.2,306.9 456.1,308.1 457.1,305.3 458.7,305.8 460.4,305.3 461.6,306.9 462.7,305.8 463.9,307.4 464.8,307.4" fill="none" stroke="#6190e6" stroke-width="1.3" stroke-linejoin="round"/></svg>
<span class="t" style="left:68.20px;top:246.79px;font-size:11px;color:#c8c8d8;transform-origin:100% 0;transform:translateX(-100%) scaleX(1.11);">-60</span>
<span class="t" style="left:68.20px;top:274.39px;font-size:11px;color:#c8c8d8;transform-origin:100% 0;transform:translateX(-100%) scaleX(1.11);">-70</span>
<span class="t" style="left:68.20px;top:301.89px;font-size:11px;color:#c8c8d8;transform-origin:100% 0;transform:translateX(-100%) scaleX(1.11);">-80</span>
<span class="t" style="left:68.20px;top:329.49px;font-size:11px;color:#c8c8d8;transform-origin:100% 0;transform:translateX(-100%) scaleX(1.11);">-90</span>
<span class="t" style="left:68.20px;top:356.99px;font-size:11px;color:#c8c8d8;transform-origin:100% 0;transform:translateX(-100%) scaleX(1.11);">-100</span>
<span class="t" style="left:68.20px;top:384.59px;font-size:11px;color:#c8c8d8;transform-origin:100% 0;transform:translateX(-100%) scaleX(1.11);">-110</span>
<span class="t" style="left:68.20px;top:412.09px;font-size:11px;color:#c8c8d8;transform-origin:100% 0;transform:translateX(-100%) scaleX(1.11);">-120</span>
<span class="t" style="left:68.20px;top:439.69px;font-size:11px;color:#c8c8d8;transform-origin:100% 0;transform:translateX(-100%) scaleX(1.11);">-130</span>
<span class="t" style="left:86.00px;top:471.09px;font-size:11px;color:#c8c8d8;transform:translateX(-50%) scaleX(0.975);">15:37:00</span>
<span class="t" style="left:163.60px;top:471.09px;font-size:11px;color:#c8c8d8;transform:translateX(-50%) scaleX(0.975);">15:38:00</span>
<span class="t" style="left:241.20px;top:471.09px;font-size:11px;color:#c8c8d8;transform:translateX(-50%) scaleX(0.975);">15:39:00</span>
<span class="t" style="left:318.80px;top:471.09px;font-size:11px;color:#c8c8d8;transform:translateX(-50%) scaleX(0.975);">15:40:00</span>
<span class="t" style="left:396.40px;top:471.09px;font-size:11px;color:#c8c8d8;transform:translateX(-50%) scaleX(0.975);">15:41:00</span>
<svg style="left:0;top:0" width="1440" height="936" viewBox="0 0 1440 936"><text transform="translate(29.6 366.8) rotate(-90)" font-size="11" fill="#c8c8d8" textLength="24.8" lengthAdjust="spacingAndGlyphs">RSRP</text></svg>
<svg style="left:0;top:0" width="1440" height="936" viewBox="0 0 1440 936"><path d="M458.500 244V467" stroke="#6a6c75" stroke-width="1" stroke-dasharray="1 2"/><path d="M73.300 393.300H465.500" stroke="#6a6c75" stroke-width="1" stroke-dasharray="1 2"/><circle cx="458.700" cy="305.800" r="4.600" fill="#6190e6" fill-opacity=".4"/><circle cx="458.700" cy="305.800" r="2.600" fill="#76a2f0"/></svg>
<svg style="left:0;top:0" width="1440" height="936" viewBox="0 0 1440 936"><path d="M537.8 263.2H938.3" stroke="#23252a" stroke-width="1"/><path d="M537.8 311.0H938.3" stroke="#23252a" stroke-width="1"/><path d="M537.8 359.3H938.3" stroke="#23252a" stroke-width="1"/><path d="M537.8 407.1H938.3" stroke="#23252a" stroke-width="1"/><path d="M537.8 454.6H938.3" stroke="#23252a" stroke-width="1"/><path d="M548.6 243.8V467.3" stroke="#23252a" stroke-width="1"/><path d="M628.3 243.8V467.3" stroke="#23252a" stroke-width="1"/><path d="M708.1 243.8V467.3" stroke="#23252a" stroke-width="1"/><path d="M787.8 243.8V467.3" stroke="#23252a" stroke-width="1"/><path d="M867.5 243.8V467.3" stroke="#23252a" stroke-width="1"/><polyline points="539.4,263.2 540.8,263.2 542.3,272.4 544.8,445.2 548.6,445.2 552.4,263.2 572.2,263.2 572.6,272.9 574.4,272.9 574.9,263.2 583.4,263.2 584.3,272.9 585.2,272.9 586.1,263.2 593.7,263.2 596.4,426.1 599.3,426.1 601.8,263.2 618.4,263.2 619.3,272.9 621.3,272.9 622.0,263.2 644.9,263.2 645.3,282.5 648.5,282.5 649.1,263.2 650.0,263.2 650.9,272.9 651.8,272.9 652.5,339.8 654.1,349.4 654.8,349.4 656.5,263.2 664.2,263.2 665.3,272.9 666.9,272.9 667.8,263.2 677.0,263.2 677.6,282.5 680.3,282.5 682.1,263.2 683.2,272.9 684.8,272.9 685.7,263.2 690.0,263.2 690.6,282.5 692.4,282.5 693.1,263.2 696.0,263.2 697.4,282.5 700.5,282.5 702.1,263.2 702.8,272.9 705.2,272.9 706.1,263.2 708.6,263.2 709.3,282.5 714.4,282.5 714.9,272.9 716.0,272.9 716.9,263.2 727.2,263.2 729.7,349.4 731.4,349.4 732.7,387.8 734.5,387.8 736.7,263.2 752.4,263.2 752.9,282.5 754.5,282.5 755.1,263.2 756.0,263.2 756.7,272.9 758.0,272.9 758.7,263.2 771.7,263.2 772.9,282.5 773.8,282.5 774.9,263.2 779.8,263.2 780.7,282.5 782.5,282.5 783.4,263.2 786.8,263.2 787.4,272.9 788.3,272.9 789.0,263.2 789.7,263.2 790.4,272.9 791.2,272.9 792.4,263.2 793.5,263.2 794.4,272.9 795.3,272.9 796.4,263.2 800.5,263.2 801.6,282.5 802.5,282.5 803.6,263.2 819.1,263.2 820.4,321.4 822.2,321.4 823.8,263.2 827.8,263.2 829.2,272.9 830.1,272.9 831.2,263.2 837.9,263.2 839.0,282.5 840.2,282.5 840.8,263.2 938.2,263.2" fill="none" stroke="#e0555f" stroke-width="1.3" stroke-linejoin="round"/></svg>
<span class="t" style="left:531.70px;top:257.79px;font-size:11px;color:#c8c8d8;transform-origin:100% 0;transform:translateX(-100%) scaleX(1.06);">25</span>
<span class="t" style="left:531.70px;top:305.59px;font-size:11px;color:#c8c8d8;transform-origin:100% 0;transform:translateX(-100%) scaleX(1.06);">20</span>
<span class="t" style="left:531.70px;top:353.89px;font-size:11px;color:#c8c8d8;transform-origin:100% 0;transform:translateX(-100%) scaleX(1.06);">15</span>
<span class="t" style="left:531.70px;top:401.69px;font-size:11px;color:#c8c8d8;transform-origin:100% 0;transform:translateX(-100%) scaleX(1.06);">10</span>
<span class="t" style="left:531.70px;top:449.19px;font-size:11px;color:#c8c8d8;transform-origin:100% 0;transform:translateX(-100%) scaleX(1.06);">5</span>
<span class="t" style="left:548.60px;top:471.09px;font-size:11px;color:#c8c8d8;transform:translateX(-50%) scaleX(0.975);">15:37:00</span>
<span class="t" style="left:628.30px;top:471.09px;font-size:11px;color:#c8c8d8;transform:translateX(-50%) scaleX(0.975);">15:38:00</span>
<span class="t" style="left:708.10px;top:471.09px;font-size:11px;color:#c8c8d8;transform:translateX(-50%) scaleX(0.975);">15:39:00</span>
<span class="t" style="left:787.80px;top:471.09px;font-size:11px;color:#c8c8d8;transform:translateX(-50%) scaleX(0.975);">15:40:00</span>
<span class="t" style="left:867.50px;top:471.09px;font-size:11px;color:#c8c8d8;transform:translateX(-50%) scaleX(0.975);">15:41:00</span>
<svg style="left:0;top:0" width="1440" height="936" viewBox="0 0 1440 936"><text transform="translate(502.6 373.9) rotate(-90)" font-size="11" fill="#c8c8d8" textLength="39.1" lengthAdjust="spacingAndGlyphs">DL MCS</text></svg>
<svg style="left:0;top:0" width="1440" height="936" viewBox="0 0 1440 936"><path d="M1037.8 251.3H1411.7" stroke="#23252a" stroke-width="1"/><path d="M1037.8 288.2H1411.7" stroke="#23252a" stroke-width="1"/><path d="M1037.8 324.6H1411.7" stroke="#23252a" stroke-width="1"/><path d="M1037.8 361.2H1411.7" stroke="#23252a" stroke-width="1"/><path d="M1037.8 398.1H1411.7" stroke="#23252a" stroke-width="1"/><path d="M1037.8 434.7H1411.7" stroke="#23252a" stroke-width="1"/><path d="M1049.6 243.8V467.3" stroke="#23252a" stroke-width="1"/><path d="M1123.6 243.8V467.3" stroke="#23252a" stroke-width="1"/><path d="M1197.5 243.8V467.3" stroke="#23252a" stroke-width="1"/><path d="M1271.5 243.8V467.3" stroke="#23252a" stroke-width="1"/><path d="M1345.6 243.8V467.3" stroke="#23252a" stroke-width="1"/><polyline points="1040.9,386.8 1041.8,383.3 1042.8,392.7 1043.7,390.3 1044.6,404.4 1045.3,402.1 1046.3,433.8 1047.0,416.2 1047.7,443.2 1048.4,412.7 1049.1,439.7 1049.8,357.4 1050.7,341.0 1051.4,263.0 1052.2,263.0 1052.8,341.0 1053.6,389.2 1054.5,391.5 1055.4,385.6 1056.4,388.0 1057.3,383.8 1058.3,396.9 1059.2,385.6 1060.1,386.8 1061.1,383.8 1062.0,396.9 1063.0,386.8 1063.9,390.3 1064.8,392.7 1065.8,393.9 1066.7,391.5 1067.7,382.1 1068.6,390.3 1069.5,397.9 1070.5,388.0 1071.4,390.3 1072.3,395.0 1073.3,386.8 1074.2,388.0 1075.2,383.8 1076.1,386.1 1077.0,396.9 1078.0,382.1 1078.9,384.5 1079.9,396.9 1080.8,389.2 1081.8,390.3 1082.7,397.9 1083.6,389.2 1084.6,390.3 1085.5,397.9 1086.4,386.8 1087.4,388.0 1088.3,399.7 1089.3,385.6 1090.2,388.0 1091.1,383.8 1092.1,399.7 1093.0,384.5 1094.0,401.4 1094.9,379.8 1095.8,399.7 1096.8,380.9 1097.7,380.5 1098.7,392.7 1099.6,395.0 1100.5,386.8 1101.5,390.3 1102.4,397.9 1103.4,386.8 1104.3,393.9 1105.2,389.2 1106.2,388.0 1107.1,390.3 1108.1,385.2 1109.0,386.8 1109.9,384.5 1110.9,396.2 1111.8,385.6 1112.8,389.2 1113.7,390.3 1114.6,389.2 1115.6,390.3 1116.5,390.3 1117.5,398.6 1118.4,389.2 1119.3,390.3 1120.3,388.0 1121.2,397.9 1122.2,386.8 1123.1,385.6 1124.0,383.8 1125.0,393.9 1125.9,385.6 1126.8,380.5 1127.8,386.8 1128.7,396.9 1129.7,388.0 1130.6,390.3 1131.5,389.2 1132.5,399.7 1133.4,389.2 1134.4,390.3 1135.3,388.0 1136.2,397.9 1137.2,385.6 1138.1,386.8 1138.8,378.6 1139.8,390.3 1140.7,385.2 1141.7,383.8 1142.6,390.3 1143.5,396.9 1144.5,390.3 1145.4,393.9 1146.3,390.3 1147.3,395.0 1148.2,390.3 1148.9,405.6 1149.6,373.9 1150.6,396.2 1151.5,383.3 1152.5,386.8 1153.4,380.9 1154.3,390.3 1155.3,380.5 1156.2,393.9 1157.2,386.8 1158.1,390.3 1159.0,397.9 1160.0,389.2 1160.9,390.3 1161.8,388.0 1162.8,397.9 1163.7,389.2 1164.7,390.3 1165.7,384.8 1166.9,389.6 1168.1,390.0 1169.4,396.9 1170.6,390.8 1171.8,396.2 1173.1,386.1 1174.3,388.0 1175.5,391.5 1176.8,390.1 1177.6,402.6 1179.2,388.0 1180.5,396.0 1181.7,384.3 1182.9,386.2 1184.2,390.2 1185.4,385.3 1186.6,383.4 1187.6,378.6 1189.1,390.5 1190.3,396.0 1191.6,382.4 1192.8,389.3 1194.0,389.3 1195.3,391.0 1196.5,395.9 1197.7,389.6 1199.0,389.3 1200.2,397.3 1201.4,388.8 1202.7,396.3 1203.9,390.7 1205.1,396.0 1206.4,382.3 1207.6,388.5 1208.8,389.5 1210.1,397.7 1211.3,385.2 1212.5,396.6 1213.8,383.4 1215.0,390.9 1216.2,398.2 1217.5,384.0 1218.7,390.2 1219.9,398.6 1221.2,383.3 1222.4,389.1 1223.6,395.4 1224.8,384.9 1226.1,397.2 1227.3,384.3 1228.5,389.6 1229.8,391.1 1231.0,395.7 1232.2,390.9 1233.5,395.9 1234.7,391.4 1236.0,398.4 1237.2,390.1 1238.4,382.5 1239.7,398.5 1240.9,385.5 1242.1,398.0 1243.3,388.9 1244.6,397.6 1245.8,383.1 1247.0,391.0 1248.3,388.9 1249.5,388.6 1250.8,396.1 1251.3,374.0 1252.0,382.3 1253.2,396.4 1254.5,388.3 1255.7,386.4 1256.9,390.3 1258.1,390.0 1259.4,395.3 1260.6,386.6 1261.8,391.5 1263.4,408.0 1264.3,377.3 1265.5,398.6 1266.8,384.7 1268.0,391.2 1269.2,390.5 1270.5,391.3 1271.7,385.4 1272.9,391.1 1274.2,385.9 1275.4,390.0 1276.6,389.2 1277.9,390.1 1279.1,397.4 1280.3,391.1 1281.6,389.3 1282.4,403.8 1283.3,372.2 1284.0,404.4 1284.7,366.4 1285.6,401.1 1286.5,385.0 1287.7,383.1 1289.0,389.7 1290.2,391.3 1291.4,395.2 1292.7,385.4 1293.9,395.8 1295.1,390.3 1296.4,386.5 1297.6,397.5 1298.8,384.1 1300.1,391.3 1301.3,389.3 1302.5,389.0 1303.8,396.9 1305.0,391.0 1306.2,391.4 1307.5,395.8 1308.7,383.4 1309.9,396.6 1311.2,389.7 1312.4,398.1 1313.6,389.5 1314.9,395.3 1316.1,388.0 1317.3,390.0 1318.6,397.9 1319.8,382.7 1321.0,382.1 1322.3,388.7 1323.5,395.4 1324.7,389.5 1326.0,390.3 1326.6,431.8 1327.2,343.0 1328.4,388.6 1329.7,382.9 1330.9,396.8 1332.1,388.5 1333.4,396.4 1334.6,389.8 1335.8,390.7 1337.1,386.0 1338.3,388.1 1339.5,390.6 1340.8,396.7 1342.0,391.3 1343.2,384.8 1344.5,390.8 1345.7,389.6 1347.4,377.3 1348.2,390.9 1349.4,390.5 1350.6,398.3 1351.8,391.5 1353.1,390.8 1354.3,398.3 1355.5,389.1 1356.8,396.7 1358.0,390.7 1359.2,382.1 1360.4,379.1 1361.7,388.5 1363.0,397.9 1364.2,382.7 1365.4,390.6 1366.7,390.4 1367.9,389.7 1369.1,388.1 1370.3,397.0 1371.6,385.6 1372.8,389.8 1374.0,389.9 1375.3,396.5 1376.5,391.2 1377.8,398.1 1379.0,389.8 1380.2,388.6 1381.3,380.4 1382.7,387.9 1383.9,389.8 1385.1,386.0 1386.4,389.7 1387.6,388.1 1388.8,389.4 1390.1,391.3 1391.3,396.8 1392.5,384.2 1393.8,391.2 1395.0,383.6 1396.2,397.3 1397.5,388.3 1399.0,441.2 1399.9,338.3 1401.2,389.0 1402.4,385.1 1403.6,397.7 1404.9,384.6 1406.1,395.9 1407.3,389.5 1408.6,384.1 1409.8,388.4 1411.5,381.3" fill="none" stroke="#7dbd6e" stroke-width="1.3" stroke-linejoin="round"/></svg>
<span class="t" style="left:1032.30px;top:245.89px;font-size:11px;color:#c8c8d8;transform-origin:100% 0;transform:translateX(-100%) scaleX(1.035);">90 Mb/s</span>
<span class="t" style="left:1032.30px;top:282.79px;font-size:11px;color:#c8c8d8;transform-origin:100% 0;transform:translateX(-100%) scaleX(1.035);">80 Mb/s</span>
<span class="t" style="left:1032.30px;top:319.19px;font-size:11px;color:#c8c8d8;transform-origin:100% 0;transform:translateX(-100%) scaleX(1.035);">70 Mb/s</span>
<span class="t" style="left:1032.30px;top:355.79px;font-size:11px;color:#c8c8d8;transform-origin:100% 0;transform:translateX(-100%) scaleX(1.035);">60 Mb/s</span>
<span class="t" style="left:1032.30px;top:392.69px;font-size:11px;color:#c8c8d8;transform-origin:100% 0;transform:translateX(-100%) scaleX(1.035);">50 Mb/s</span>
<span class="t" style="left:1032.30px;top:429.29px;font-size:11px;color:#c8c8d8;transform-origin:100% 0;transform:translateX(-100%) scaleX(1.035);">40 Mb/s</span>
<span class="t" style="left:1049.60px;top:471.09px;font-size:11px;color:#c8c8d8;transform:translateX(-50%) scaleX(0.975);">15:37:00</span>
<span class="t" style="left:1123.60px;top:471.09px;font-size:11px;color:#c8c8d8;transform:translateX(-50%) scaleX(0.975);">15:38:00</span>
<span class="t" style="left:1197.50px;top:471.09px;font-size:11px;color:#c8c8d8;transform:translateX(-50%) scaleX(0.975);">15:39:00</span>
<span class="t" style="left:1271.50px;top:471.09px;font-size:11px;color:#c8c8d8;transform:translateX(-50%) scaleX(0.975);">15:40:00</span>
<span class="t" style="left:1345.60px;top:471.09px;font-size:11px;color:#c8c8d8;transform:translateX(-50%) scaleX(0.975);">15:41:00</span>
<svg style="left:0;top:0" width="1440" height="936" viewBox="0 0 1440 936"><text transform="translate(976.0 391.0) rotate(-90)" font-size="11" fill="#c8c8d8" textLength="73.2" lengthAdjust="spacingAndGlyphs">DL Throughput</text></svg>
<svg style="left:0;top:0" width="1440" height="936" viewBox="0 0 1440 936"><path d="M381.83 626.18A164 164 0 0 1 402.32 769.28" fill="none" stroke="#242529" stroke-width="34"/><path d="M90.38 769.28A164 164 0 0 1 381.83 626.18" fill="none" stroke="#6491ea" stroke-width="34"/></svg>
<svg style="left:0;top:0" width="1440" height="936" viewBox="0 0 1440 936"><path d="M563.53 769.28A164 164 0 1 1 875.47 769.28" fill="none" stroke="#e05662" stroke-width="34"/></svg>
<svg style="left:0;top:0" width="1440" height="936" viewBox="0 0 1440 936"><path d="M1103.58 581.06A164 164 0 0 1 1348.87 769.28" fill="none" stroke="#242529" stroke-width="34"/><path d="M1036.93 769.28A164 164 0 0 1 1103.58 581.06" fill="none" stroke="#86bf73" stroke-width="34"/></svg>
<span class="t" style="left:197.30px;top:705.31px;font-size:60px;color:#6491ea;transform:scaleX(1.1301);transform-origin:0 0;-webkit-text-stroke:.8px #6491ea;">-80</span>
<span class="t" style="left:685.20px;top:705.31px;font-size:60px;color:#e05662;transform:scaleX(1.0037);transform-origin:0 0;-webkit-text-stroke:.8px #e05662;">25</span>
<span class="t" style="left:1091.20px;top:708.81px;font-size:45px;color:#86bf73;transform:scaleX(1.0278);transform-origin:0 0;-webkit-text-stroke:.7px #86bf73;">54.8 Mb/s</span>
<div id="winborder"></div>
</div>
</body></html>
